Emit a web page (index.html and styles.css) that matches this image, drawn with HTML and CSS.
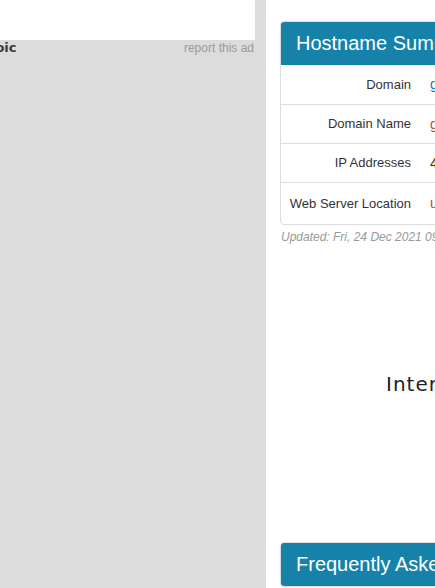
FILE: index.html
```html
<!DOCTYPE html>
<html>
<head>
<meta charset="utf-8">
<link rel="stylesheet" href="styles.css">
</head>
<body>
<div class="page">
  <aside class="side">
    <div class="ad"></div>
    <div class="ad-foot">
      <span class="brand">ezoic</span>
      <span class="report">report this ad</span>
    </div>
  </aside>
  <main class="main">
    <section class="card">
      <h2 class="card-head">Hostname Summary</h2>
      <table class="summary">
        <tr><th>Domain</th><td class="v-link">google.com</td></tr>
        <tr><th>Domain Name</th><td class="v-gold">google</td></tr>
        <tr><th>IP Addresses</th><td class="v-dark">4</td></tr>
        <tr class="tall"><th>Web Server Location</th><td class="v-gold">united states</td></tr>
      </table>
    </section>
    <p class="updated">Updated: Fri, 24 Dec 2021 09:14:33 GMT</p>
    <div class="mid">
      <p class="inter">Internet</p>
    </div>
    <section class="card faq">
      <h2 class="card-head">Frequently Asked Questions</h2>
    </section>
  </main>
</div>
</body>
</html>
```
FILE: styles.css
```css
html, body {
  margin: 0;
  padding: 0;
  width: 435px;
  height: 588px;
  overflow: hidden;
  background: #fff;
  font-family: "Liberation Sans", Arial, sans-serif;
}
.page {
  display: flex;
  width: 800px;
  height: 588px;
  overflow: hidden;
}
.side {
  width: 266px;
  flex: none;
  background: #dcdcdc;
}
.ad {
  width: 255px;
  height: 40px;
  background: #fff;
}
.ad-foot {
  width: 255px;
  display: flex;
  justify-content: space-between;
  align-items: center;
  height: 15px;
  overflow: hidden;
}
.brand {
  font-family: "DejaVu Sans", sans-serif;
  font-weight: bold;
  font-size: 13px;
  color: #3a3a3a;
  margin-left: -21px;
}
.report {
  font-size: 12px;
  color: #9a9a9a;
  margin-right: 1px;
}
.main {
  width: 520px;
  flex: none;
  padding: 21px 0 0 14px;
  box-sizing: border-box;
}
.card {
  border: 1px solid #ddd;
  border-radius: 4px;
  overflow: hidden;
  width: 480px;
}
.card-head {
  margin: 0;
  background: #1682a9;
  color: #fff;
  font-weight: normal;
  font-size: 20px;
  height: 43px;
  line-height: 43px;
  padding-left: 15px;
}
.summary {
  border-collapse: collapse;
  width: 100%;
  font-size: 13px;
}
.summary tr {
  height: 39px;
  border-top: 1px solid #ddd;
}
.summary tr:first-child {
  border-top: none;
}
.summary tr.tall {
  height: 42px;
}
.summary th {
  width: 130px;
  text-align: right;
  font-weight: normal;
  color: #333;
  padding: 0 9px 0 0;
  white-space: nowrap;
}
.summary td {
  padding: 0 0 0 10px;
  text-align: left;
  font-size: 14px;
}
.v-link { color: #1a6fa6; }
.v-gold { color: #a0522d; }
.v-dark { color: #333; }
.updated {
  margin: 5px 0 0 1px;
  font-size: 12px;
  font-style: italic;
  color: #999;
}
.mid {
  height: 298px;
  padding-top: 1px;
  box-sizing: border-box;
}
.inter {
  margin: 127px 0 0 0;
  padding-left: 106px;
  font-family: "DejaVu Sans", Verdana, sans-serif;
  font-size: 20px;
  letter-spacing: 1px;
  color: #222;
  white-space: nowrap;
}
```
